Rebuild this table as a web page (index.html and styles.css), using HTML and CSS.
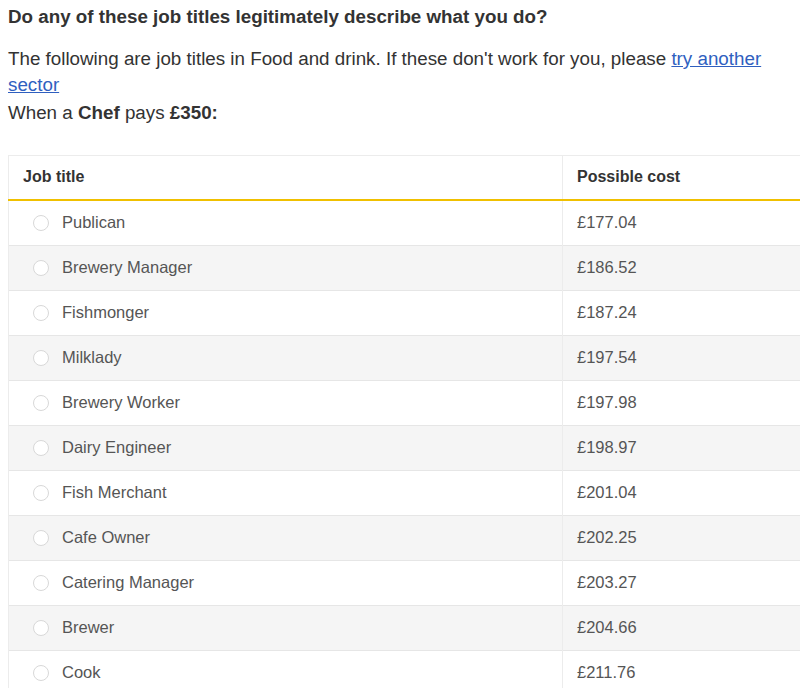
FILE: index.html
```html
<!DOCTYPE html>
<html lang="en">
<head>
	<meta charset="UTF-8">
	<title>Job titles</title>
	<link rel="stylesheet" href="styles.css">
</head>
<body>

<div id="app">
	<h3 class="question">Do any of these job titles legitimately describe what you do?</h3>
	<p class="intro">The following are job titles in Food and drink. If these don't work for you, please <a href="#">try another sector</a></p>
	<p class="when">When a <b>Chef</b> pays <b>£350:</b></p>

	<table class="jobs">
		<thead>
			<tr>
				<th class="col_title">Job title</th>
				<th>Possible cost</th>
			</tr>
		</thead>
		<tbody>
			<tr><td><label><span class="radio"></span>Publican</label></td><td>£177.04</td></tr>
			<tr><td><label><span class="radio"></span>Brewery Manager</label></td><td>£186.52</td></tr>
			<tr><td><label><span class="radio"></span>Fishmonger</label></td><td>£187.24</td></tr>
			<tr><td><label><span class="radio"></span>Milklady</label></td><td>£197.54</td></tr>
			<tr><td><label><span class="radio"></span>Brewery Worker</label></td><td>£197.98</td></tr>
			<tr><td><label><span class="radio"></span>Dairy Engineer</label></td><td>£198.97</td></tr>
			<tr><td><label><span class="radio"></span>Fish Merchant</label></td><td>£201.04</td></tr>
			<tr><td><label><span class="radio"></span>Cafe Owner</label></td><td>£202.25</td></tr>
			<tr><td><label><span class="radio"></span>Catering Manager</label></td><td>£203.27</td></tr>
			<tr><td><label><span class="radio"></span>Brewer</label></td><td>£204.66</td></tr>
			<tr><td><label><span class="radio"></span>Cook</label></td><td>£211.76</td></tr>
		</tbody>
	</table>
</div>

</body>
</html>
```

FILE: styles.css
```css
html, body {
	margin: 0;
	padding: 0;
	overflow: hidden;
	background-color: #fff;
}

body {
	padding: 0 0 0 8px;
	font-family: "Liberation Sans", Arial, sans-serif;
	color: #333;
}

#app {
	width: 830px;
}

.question {
	font-size: 18.8px;
	font-weight: bold;
	margin: 6px 0 0 0;
	line-height: 22px;
}

.intro, .when {
	width: 785px;
	font-size: 18.8px;
	line-height: 25.5px;
}

.intro {
	margin: 18px 0 0 0;
}

.intro a {
	color: #2f5fbf;
}

.when {
	margin: 3px 0 0 0;
}

.jobs {
	width: 100%;
	margin-top: 29px;
	border-collapse: collapse;
	border: 1px solid #ececec;
	font-size: 16px;
}

.jobs th {
	text-align: left;
	font-weight: bold;
	height: 43px;
	padding: 0 14px;
	border-bottom: 2px solid #f0c000;
	border-left: 1px solid #ececec;
}

.jobs th.col_title {
	width: 525px;
	border-left: none;
}

.jobs td {
	height: 44px;
	padding: 0 14px;
	font-size: 16.5px;
	color: #555;
	border-top: 1px solid #e6e6e6;
	border-left: 1px solid #ececec;
}

.jobs tbody tr:first-child td {
	border-top: none;
}

.jobs tbody tr:nth-child(even) td {
	background-color: #f5f5f5;
}

.jobs label {
	display: flex;
	align-items: center;
}

.radio {
	width: 14px;
	height: 14px;
	border: 1.5px solid #d8d8d8;
	border-radius: 50%;
	background: #fff;
	margin: 0 13px 0 10px;
}
```
